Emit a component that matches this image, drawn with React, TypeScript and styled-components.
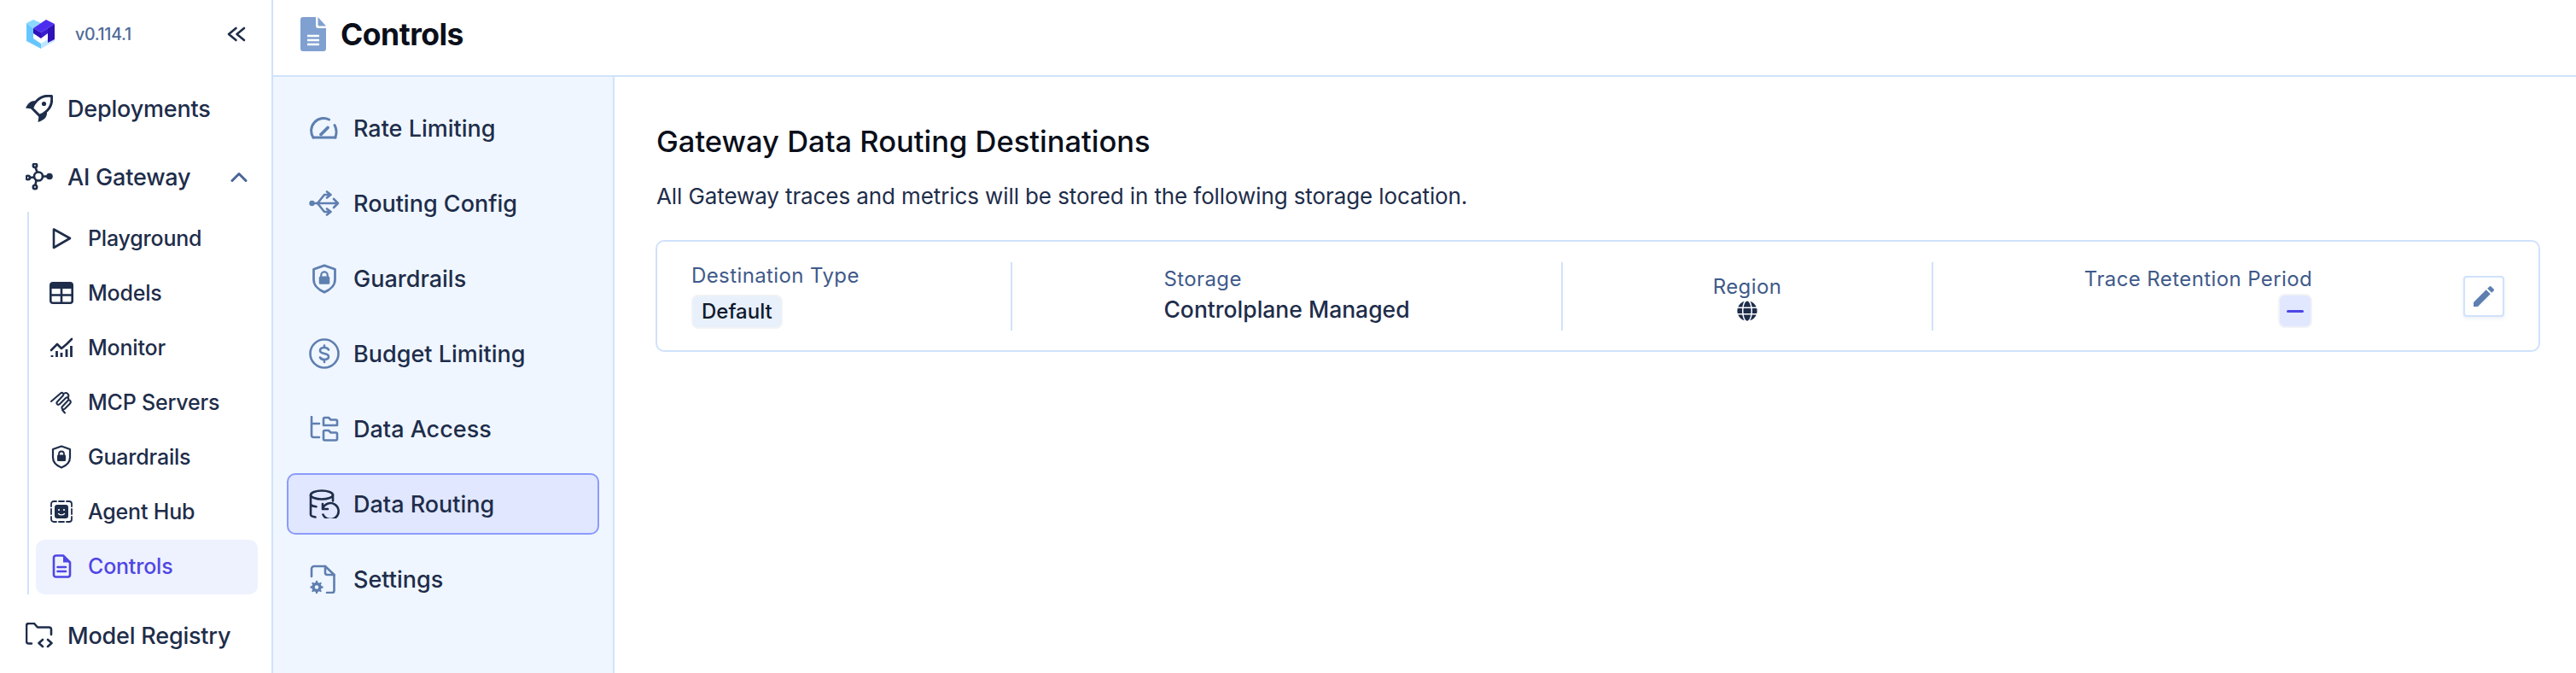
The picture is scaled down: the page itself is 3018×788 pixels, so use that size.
import React from "react";
import styled, { createGlobalStyle } from "styled-components";
import { FaGlobe } from "react-icons/fa";
import { MdEdit } from "react-icons/md";

const INK = "#1e2d4a";
const LINE = "#d0e2fb";
const MUTED = "#5f7fb0";

const GlobalStyle = createGlobalStyle`
  html, body {
    margin: 0;
    padding: 0;
    background: #fff;
    font-family: "Inter", "Liberation Sans", sans-serif;
    overflow: hidden;
  }
`;

type IconProps = { w: number; h: number; children: React.ReactNode; color?: string };

const Ico = ({ w, h, children, color = "currentColor" }: IconProps) => (
  <svg
    width={w}
    height={h}
    viewBox={`0 0 ${w} ${h}`}
    fill="none"
    stroke={color}
    strokeWidth={2.6}
    strokeLinecap="round"
    strokeLinejoin="round"
  >
    {children}
  </svg>
);

const Logo = () => (
  <svg width={35} height={34} viewBox="0 0 35 34">
    <polygon points="1,4 9,0 18,4 9,10" fill="#8ed8ff" />
    <polygon points="1,4 9,10 9,22 18,28 18,34 1,25" fill="#66c6ff" />
    <polygon points="18,28 26,23 26,16 34,20 34,25 18,34" fill="#bfe6ff" />
    <polygon points="9,10 24,0 34,5 18,15" fill="#4c2df0" />
    <polygon points="9,10 18,15 18,22 9,16" fill="#2f12b8" />
    <polygon points="18,15 26,10 26,16 18,22" fill="#3a1dcf" />
    <polygon points="26,10 34,5 34,23 26,27" fill="#2f12b8" />
  </svg>
);

const Rocket = () => (
  <Ico w={32} h={32}>
    <path
      d="M30.500 1.500c-7-1-13 1-17.500 5.500-2.200 2.200-4 5-5.400 8.800l8.600 8.600c3.800-1.600 6.600-3.400 8.800-5.600 4.500-4.500 6.500-10.300 5.500-17.300z"
      strokeWidth={3}
    />
    <circle cx="21.500" cy="10.500" r="2.600" fill="currentColor" stroke="none" />
    <path d="M12 7C6.500 6.500 2.500 10 0 15.500l7.500 1z" fill="currentColor" stroke="none" />
    <path d="M25 20c.5 5.500-2.500 9.500-10.500 12l1-7.500z" fill="currentColor" stroke="none" />
  </Ico>
);

const Hub = () => (
  <Ico w={32} h={32}>
    <circle cx="15" cy="15.500" r="5" />
    <circle cx="28" cy="15.500" r="3.800" fill="currentColor" stroke="none" />
    <circle cx="11" cy="2.800" r="2.200" />
    <circle cx="2.800" cy="17" r="2.200" />
    <circle cx="11" cy="28" r="2.200" />
    <path d="M20 15.500h5M13.500 10.500L11.500 5M10 16.500L5 17M12.500 20l-1 5.500" />
  </Ico>
);

const Play = () => (
  <Ico w={28} h={26}>
    <path d="M5 2.500L24 13 5 24z" />
  </Ico>
);

const Table = () => (
  <Ico w={28} h={26}>
    <rect x="1.300" y="1.300" width="25.400" height="23.400" rx="2.500" />
    <path d="M1.500 3.500a2 2 0 012-2h21a2 2 0 012 2v4.500h-25z" fill="currentColor" stroke="none" />
    <path d="M1.500 15.500h25M14 8v16" />
  </Ico>
);

const Chart = () => (
  <Ico w={28} h={26}>
    <path d="M2 16l7-7 5 5 6-5 6-6" />
    <path d="M3 24v-2M8.500 24v-7M14 24v-5M20 24v-9M25.500 24V11" strokeWidth={2.8} strokeLinecap="butt" />
  </Ico>
);

const Clip = () => (
  <Ico w={28} h={28}>
    <path
      d="M2 13L13 3.500c2-1.700 4.500.8 2.800 2.800L9 13.500c-1.700 2 .8 4.300 2.800 2.800L19 9c2-1.700 4.500.8 2.800 2.800L15 19c-1.700 2 .8 4.300 2.800 2.800l6-6c2.500-2.500-.5-6-2.500-3.500M15 23l3 3.500"
      strokeWidth={2}
    />
    <path d="M17.500 3.500c2.500-1.500 6 1.500 4.500 4.500" strokeWidth={2} />
  </Ico>
);

const ShieldLock = ({ w = 24, h = 28 }: { w?: number; h?: number }) => (
  <svg width={w} height={h} viewBox="0 0 24 28" fill="none" stroke="currentColor" strokeWidth={2.2} strokeLinejoin="round">
    <path d="M12 1.500l10 3.500v9.500c0 5.500-4.500 9.800-10 12-5.500-2.200-10-6.500-10-12V5z" />
    <rect x="7" y="11.500" width="10" height="7.500" rx="1.200" fill="currentColor" stroke="none" />
    <path d="M9 12V10.500a3 3 0 016 0V12" strokeWidth={1.800} />
  </svg>
);

const Agent = () => (
  <Ico w={28} h={28}>
    <rect x="6" y="6" width="16" height="16" rx="3" fill="currentColor" stroke="none" />
    <path
      d="M2 8V5a3 3 0 013-3h3M11 2h6M20 2h3a3 3 0 013 3v3M26 11v6M26 20v3a3 3 0 01-3 3h-3M17 26h-6M8 26H5a3 3 0 01-3-3v-3M2 17v-6"
      strokeWidth={1.800}
    />
    <circle cx="11" cy="12" r="1.100" fill="#fff" stroke="none" />
    <circle cx="17" cy="12" r="1.100" fill="#fff" stroke="none" />
    <path d="M10.500 16.500c2 1.800 5 1.800 7 0" stroke="#fff" strokeWidth={1.400} />
  </Ico>
);

const FileLines = () => (
  <Ico w={28} h={28}>
    <path d="M5 4a2.500 2.500 0 012.500-2.500H16L24 9.500V24a2.500 2.500 0 01-2.500 2.500h-14A2.500 2.500 0 015 24z" />
    <path d="M16 1.500v8h8z" fill="currentColor" stroke="none" />
    <path d="M9.500 15h9.500M9.500 20h9.500" />
  </Ico>
);

const FolderCode = () => (
  <Ico w={32} h={30}>
    <path d="M7 24.500H3.500A2.500 2.500 0 011 22V3.500A2.500 2.500 0 013.500 1H10l4 4.500h13.500A2.500 2.500 0 0130 8v6" />
    <path d="M20 20l-4.500 4 4.500 4M26 20l4.500 4-4.500 4" />
  </Ico>
);

const DoubleLeft = () => (
  <Ico w={22} h={18}>
    <path d="M10.500 2L2 9l8.500 7M20 2L11.500 9 20 16" />
  </Ico>
);

const ChevronUp = () => (
  <Ico w={20} h={14} color="#4a6595">
    <path d="M2 11.500L10 3.500l8 8" strokeWidth={3} />
  </Ico>
);

const PageFile = () => (
  <svg width={30} height={40} viewBox="0 0 30 40">
    <path d="M3 0h15v10a3 3 0 003 3h9v24a3 3 0 01-3 3H3a3 3 0 01-3-3V3a3 3 0 013-3z" fill="#7fa0d0" />
    <path d="M20.500 0L30 10.500h-8a1.500 1.500 0 01-1.500-1.500z" fill="#7fa0d0" />
    <path d="M8 22h14M8 27h14M8 32h14" stroke="#fff" strokeWidth={2.600} />
  </svg>
);

const Gauge = () => (
  <Ico w={36} h={26}>
    <path d="M5 24A14.500 14.500 0 0123.500 3" strokeWidth={3} />
    <path d="M30 9.500c2.500 4.500 2.500 10 .8 14.500" strokeWidth={3} />
    <path d="M5 24h26" strokeWidth={3} />
    <path d="M14 20.500l8-8" strokeWidth={3.800} />
  </Ico>
);

const UsbRoute = () => (
  <Ico w={36} h={30}>
    <circle cx="3.500" cy="15" r="3.200" fill="currentColor" stroke="none" />
    <path d="M4 15h30M29 10l5 5-5 5" />
    <path d="M10 15l8-10h7M21 1.500l4.500 3.500L21 8.500" />
    <path d="M10 15l8 10h7M21 21.500l4.500 3.500L21 28.500" />
  </Ico>
);

const Dollar = () => (
  <Ico w={36} h={36}>
    <circle cx="18" cy="18" r="16.500" />
    <path d="M23 13.500c-1-1.800-2.800-2.500-5-2.500-2.800 0-5 1.300-5 3.600 0 5 10 2 10 7 0 2.300-2.200 3.400-5 3.400-2.200 0-4-.7-5-2.500M18 8.500V11M18 25.500v2.500" />
  </Ico>
);

const TreeFolders = () => (
  <Ico w={36} h={30}>
    <path d="M3 1v21.500A2.500 2.500 0 005.500 25H12M3 9h9" />
    <path d="M17 11V3.500A1.500 1.500 0 0118.500 2H23l2.500 2.500h6A1.500 1.500 0 0133 6v5z" />
    <path d="M17 27V18.500A1.500 1.500 0 0118.500 17H23l2.500 2.500h6A1.500 1.500 0 0133 21v6a1.500 1.500 0 01-1.500 1.500h-13A1.500 1.500 0 0117 27z" />
  </Ico>
);

const DataRestore = () => (
  <Ico w={36} h={34}>
    <ellipse cx="15" cy="6.500" rx="13" ry="5" />
    <path d="M2 6.500v23c0 1.500 2.500 2.500 5.500 3M28 6.500v7M2 18c1.500 1.300 4 2 6.500 2.300" />
    <path d="M16 17v6h6M16 23a9.500 9.500 0 11.500 6.500" />
  </Ico>
);

const FileGear = () => (
  <Ico w={36} h={34}>
    <path d="M3 14V5a3 3 0 013-3h13l10.500 10v18.500a2.500 2.500 0 01-2.500 2.500h-6" />
    <path d="M19 2v7.500a2.500 2.500 0 002.500 2.500h8" />
    <circle cx="9" cy="26.500" r="4" strokeWidth={3.500} />
    <path
      d="M9 20v2M9 31v2M2.500 26.500h2M13.500 26.500h2M4.500 22l1.500 1.500M12 29.500l1.500 1.500M4.500 31L6 29.500M12 23.500l1.500-1.500"
      strokeWidth={2.400}
    />
  </Ico>
);

const gatewayItems = [
  { label: "Playground", icon: <Play /> },
  { label: "Models", icon: <Table /> },
  { label: "Monitor", icon: <Chart /> },
  { label: "MCP Servers", icon: <Clip /> },
  { label: "Guardrails", icon: <ShieldLock /> },
  { label: "Agent Hub", icon: <Agent /> },
  { label: "Controls", icon: <FileLines />, active: true },
];

const controlItems = [
  { label: "Rate Limiting", icon: <Gauge /> },
  { label: "Routing Config", icon: <UsbRoute /> },
  { label: "Guardrails", icon: <ShieldLock w={30} h={35} /> },
  { label: "Budget Limiting", icon: <Dollar /> },
  { label: "Data Access", icon: <TreeFolders /> },
  { label: "Data Routing", icon: <DataRestore />, active: true },
  { label: "Settings", icon: <FileGear /> },
];

export default function App() {
  return (
    <Shell>
      <GlobalStyle />
      <Sidebar>
        <Brand>
          <Logo />
          <Version>v0.114.1</Version>
          <Collapse>
            <DoubleLeft />
          </Collapse>
        </Brand>
        <TopItem>
          <TopIcon>
            <Rocket />
          </TopIcon>
          Deployments
        </TopItem>
        <TopItem>
          <TopIcon>
            <Hub />
          </TopIcon>
          AI Gateway
          <Caret>
            <ChevronUp />
          </Caret>
        </TopItem>
        <SubGroup>
          {gatewayItems.map((item) => (
            <SubItem key={item.label} $active={item.active}>
              <SubIcon>{item.icon}</SubIcon>
              {item.label}
            </SubItem>
          ))}
        </SubGroup>
        <RegistryItem>
          <TopIcon>
            <FolderCode />
          </TopIcon>
          Model Registry
        </RegistryItem>
      </Sidebar>

      <Content>
        <Header>
          <PageFile />
          <PageTitle>Controls</PageTitle>
        </Header>
        <Body>
          <ControlNav>
            {controlItems.map((item) => (
              <ControlItem key={item.label} $active={item.active}>
                <ControlIcon $active={item.active}>{item.icon}</ControlIcon>
                {item.label}
              </ControlItem>
            ))}
          </ControlNav>
          <Main>
            <Title>Gateway Data Routing Destinations</Title>
            <Subtitle>All Gateway traces and metrics will be stored in the following storage location.</Subtitle>
            <Card>
              <FirstCell>
                <Label>Destination Type</Label>
                <DefaultTag>Default</DefaultTag>
              </FirstCell>
              <Cell>
                <Stack>
                  <Label>Storage</Label>
                  <Value>Controlplane Managed</Value>
                </Stack>
              </Cell>
              <Cell>
                <CenterStack>
                  <Label>Region</Label>
                  <GlobeWrap>
                    <FaGlobe size={24} />
                  </GlobeWrap>
                </CenterStack>
              </Cell>
              <Cell>
                <EndStack>
                  <Label>Trace Retention Period</Label>
                  <DashTag>
                    <Dash />
                  </DashTag>
                </EndStack>
              </Cell>
              <EditButton>
                <MdEdit size={32} />
              </EditButton>
            </Card>
          </Main>
        </Body>
      </Content>
    </Shell>
  );
}

const Shell = styled.div`
  display: flex;
  width: 3018px;
  height: 788px;
  overflow: hidden;
  color: ${INK};
`;

const Sidebar = styled.aside`
  width: 320px;
  flex: none;
  box-sizing: border-box;
  border-right: 2px solid ${LINE};
  background: #fff;
`;

const Brand = styled.div`
  display: flex;
  align-items: center;
  height: 80px;
  margin-bottom: 7px;
  padding-left: 30px;
`;

const Version = styled.span`
  margin-left: 23px;
  font-size: 19.500px;
  font-weight: 500;
  letter-spacing: -0.3px;
  color: #4f6a99;
`;

const Collapse = styled.span`
  display: flex;
  margin-left: auto;
  margin-right: 30px;
`;

const TopItem = styled.div`
  display: flex;
  align-items: center;
  height: 80px;
  padding-left: 30px;
  font-size: 27px;
  font-weight: 500;
  letter-spacing: -0.2px;
`;

const RegistryItem = styled(TopItem)`
  margin-top: 8px;
  padding-bottom: 2px;
`;

const TopIcon = styled.span`
  display: flex;
  justify-content: center;
  width: 32px;
  margin-right: 17px;
`;

const Caret = styled.span`
  display: flex;
  margin-left: auto;
  margin-right: 28px;
`;

const SubGroup = styled.div`
  margin: 1px 0 0 32px;
  padding-left: 8px;
  border-left: 2px solid ${LINE};
`;

const SubItem = styled.div<{ $active?: boolean }>`
  display: flex;
  align-items: center;
  width: 260px;
  height: 64px;
  box-sizing: border-box;
  padding: 0 0 2px 16px;
  border-radius: 10px;
  font-size: 25px;
  font-weight: 500;
  letter-spacing: -0.2px;
  color: ${({ $active }) => ($active ? "#4f46e5" : INK)};
  background: ${({ $active }) => ($active ? "#eef2ff" : "transparent")};
`;

const SubIcon = styled.span`
  display: flex;
  justify-content: center;
  width: 28px;
  margin-right: 17px;
`;

const Content = styled.div`
  display: flex;
  flex-direction: column;
  flex: 1;
  min-width: 0;
`;

const Header = styled.header`
  display: flex;
  align-items: center;
  gap: 17px;
  height: 90px;
  flex: none;
  box-sizing: border-box;
  padding: 0 0 8px 32px;
  border-bottom: 2px solid ${LINE};
`;

const PageTitle = styled.h1`
  margin: 0;
  font-size: 35.500px;
  font-weight: 700;
  letter-spacing: -0.5px;
  color: #0a0f1a;
`;

const Body = styled.div`
  display: flex;
  flex: 1;
  min-height: 0;
`;

const ControlNav = styled.nav`
  display: flex;
  flex-direction: column;
  gap: 16px;
  width: 400px;
  flex: none;
  box-sizing: border-box;
  padding: 24px 16px 0;
  background: #eff6ff;
  border-right: 2px solid ${LINE};
`;

const ControlItem = styled.div<{ $active?: boolean }>`
  display: flex;
  align-items: center;
  height: 72px;
  flex: none;
  box-sizing: border-box;
  padding-left: 24px;
  border: 2px solid ${({ $active }) => ($active ? "#8b9bfb" : "transparent")};
  border-radius: 10px;
  background: ${({ $active }) => ($active ? "#e0e7ff" : "transparent")};
  font-size: 27px;
  font-weight: 500;
`;

const ControlIcon = styled.span<{ $active?: boolean }>`
  display: flex;
  justify-content: center;
  width: 36px;
  margin-right: 16px;
  color: ${({ $active }) => ($active ? INK : MUTED)};
`;

const Main = styled.main`
  flex: 1;
  min-width: 0;
  padding: 54px 42px 0 48px;
`;

const Title = styled.h2`
  margin: 0 0 0 1px;
  font-size: 34.500px;
  line-height: 44px;
  font-weight: 500;
  color: #0a0f1a;
`;

const Subtitle = styled.p`
  margin: 24px 0 0 1px;
  font-size: 26px;
  line-height: 36px;
  font-weight: 400;
  letter-spacing: -0.1px;
`;

const Card = styled.section`
  display: grid;
  grid-template-columns: 374px 645px 434px 623px 48px;
  align-items: center;
  height: 131px;
  margin-top: 33px;
  box-sizing: border-box;
  padding-left: 40px;
  border: 2px solid ${LINE};
  border-radius: 10px;
`;

const FirstCell = styled.div`
  display: flex;
  flex-direction: column;
  align-items: flex-start;
  gap: 6px;
  height: 80px;
  padding-top: 1px;
`;

const Cell = styled.div`
  display: flex;
  align-items: center;
  justify-content: center;
  height: 80px;
  border-left: 2px solid ${LINE};
`;

const Stack = styled.div`
  display: flex;
  flex-direction: column;
  gap: 2px;
  padding-bottom: 3px;
`;

const CenterStack = styled(Stack)`
  align-items: center;
  gap: 0;
  padding: 2px 0 0;
`;

const EndStack = styled(Stack)`
  align-items: flex-end;
  gap: 1px;
  padding: 2px 0 0;
`;

const Label = styled.span`
  font-size: 24px;
  line-height: 32px;
  letter-spacing: 0.4px;
  color: #3f5a8a;
`;

const Value = styled.span`
  font-size: 26.500px;
  line-height: 34px;
  font-weight: 500;
`;

const DefaultTag = styled.span`
  box-sizing: border-box;
  height: 40px;
  padding: 0 10px;
  border: 2px solid #f1f3f5;
  border-radius: 8px;
  background: #e8f0fb;
  font-size: 24px;
  line-height: 36px;
  font-weight: 500;
  color: #0f1a2b;
`;

const GlobeWrap = styled.span`
  display: flex;
`;

const DashTag = styled.span`
  display: flex;
  align-items: center;
  justify-content: center;
  box-sizing: border-box;
  width: 40px;
  height: 40px;
  border: 2px solid #f1f3f5;
  border-radius: 8px;
  background: #e0e7ff;
`;

const Dash = styled.span`
  width: 20px;
  height: 3px;
  border-radius: 2px;
  background: #4f46e5;
`;

const EditButton = styled.button`
  display: flex;
  align-items: center;
  justify-content: center;
  box-sizing: border-box;
  width: 48px;
  height: 48px;
  padding: 0;
  border: 2px solid ${LINE};
  border-radius: 4px;
  background: #fff;
  color: ${MUTED};
  box-shadow: 0 2px 4px rgba(95, 127, 176, 0.12);
`;
